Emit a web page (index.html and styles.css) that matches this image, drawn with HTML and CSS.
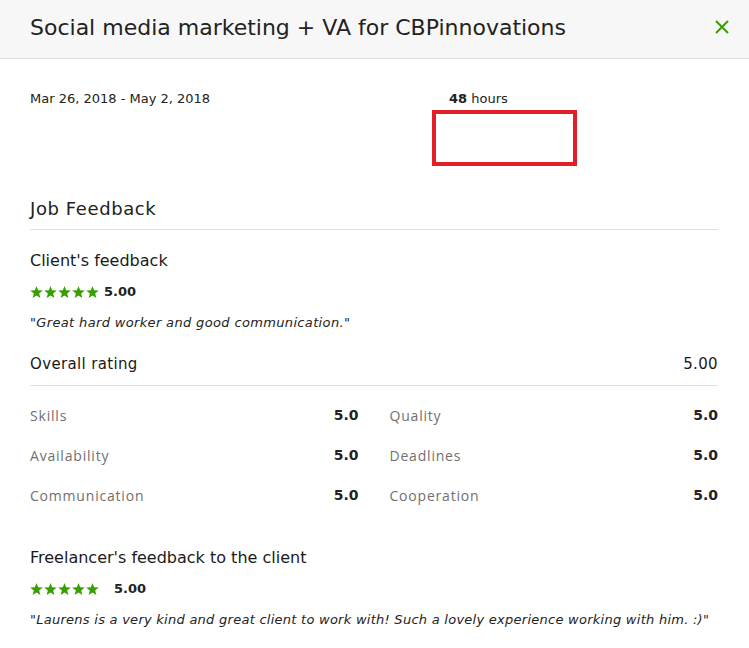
FILE: index.html
```html
<!DOCTYPE html>
<html>
<head>
<meta charset="utf-8">
<link rel="stylesheet" href="styles.css">
</head>
<body>
<div class="modal">
  <header class="head">
    <h1 class="title">Social media marketing + VA for CBPinnovations</h1>
    <button class="close" aria-label="Close">
      <svg width="16" height="16" viewBox="0 0 16 16"><path d="M2 2 L14 14 M14 2 L2 14" stroke="#37a000" stroke-width="2" fill="none"/></svg>
    </button>
  </header>
  <div class="body">
    <div class="meta">
      <div class="dates">Mar 26, 2018 - May 2, 2018</div>
      <div class="hours-col">
        <div class="hours"><b>48</b> hours</div>
        <div class="redbox"></div>
      </div>
    </div>

    <h2 class="section">Job Feedback</h2>

    <h3 class="sub">Client's feedback</h3>
    <div class="rating">
      <span class="stars">
        <svg viewBox="0 0 69 12" width="69" height="12">
          <g fill="#37a000">
            <path id="s" d="M6.5 0 L8.15 4.33 L12.78 4.56 L9.16 7.47 L10.38 11.94 L6.5 9.4 L2.62 11.94 L3.84 7.47 L0.22 4.56 L4.85 4.33Z"/>
            <use href="#s" x="14"/><use href="#s" x="28"/><use href="#s" x="42"/><use href="#s" x="56"/>
          </g>
        </svg>
      </span>
      <b class="score">5.00</b>
    </div>
    <p class="quote">"Great hard worker and good communication."</p>

    <div class="overall">
      <span>Overall rating</span>
      <span>5.00</span>
    </div>

    <div class="grid">
      <div class="row"><span class="lbl">Skills</span><b>5.0</b></div>
      <div class="row"><span class="lbl">Quality</span><b>5.0</b></div>
      <div class="row"><span class="lbl">Availability</span><b>5.0</b></div>
      <div class="row"><span class="lbl">Deadlines</span><b>5.0</b></div>
      <div class="row"><span class="lbl">Communication</span><b>5.0</b></div>
      <div class="row"><span class="lbl">Cooperation</span><b>5.0</b></div>
    </div>

    <h3 class="sub sub2">Freelancer's feedback to the client</h3>
    <div class="rating rating2">
      <span class="stars">
        <svg viewBox="0 0 69 12" width="69" height="12">
          <g fill="#37a000">
            <use href="#s" x="0"/><use href="#s" x="14"/><use href="#s" x="28"/><use href="#s" x="42"/><use href="#s" x="56"/>
          </g>
        </svg>
      </span>
      <b class="score">5.00</b>
    </div>
    <p class="quote quote2">"Laurens is a very kind and great client to work with! Such a lovely experience working with him. :)"</p>
  </div>
</div>
</body>
</html>
```
FILE: styles.css
```css
* { box-sizing: border-box; }
html, body { margin: 0; padding: 0; background: #fff; }
body { font-family: "DejaVu Sans", "Open Sans", sans-serif; color: #222; }
.modal { width: 749px; height: 648px; overflow: hidden; }
.head {
  height: 59px;
  background: #f7f7f7;
  border-bottom: 1px solid #e0e0e0;
  display: flex;
  align-items: center;
  justify-content: space-between;
  padding: 0 19px 4px 30px;
}
.title { margin: 0; font-size: 22px; line-height: 29px; font-weight: 400; color: #222; }
.close { background: none; border: 0; padding: 0; width: 16px; height: 16px; display: flex; margin-top: 0; }
.body { padding: 0 31px 0 30px; }
.meta { display: flex; padding-top: 31px; height: 136px; }
.dates { width: 419px; font-size: 13px; line-height: 18px; color: #222; }
.hours { font-size: 13px; line-height: 18px; color: #222; }
.hours b { font-weight: 700; }
.redbox {
  width: 145px; height: 56px;
  border: 4px solid #e31e26;
  margin: 2px 0 0 -17px;
}
.section { margin: 2px 0 0; font-size: 18px; line-height: 23px; letter-spacing: 0.6px; font-weight: 400; color: #222; padding-bottom: 9px; border-bottom: 1px solid #e0e0e0; }
.sub { margin: 0; font-size: 16px; line-height: 20px; font-weight: 400; color: #1a1a1a; padding-top: 21px; }
.rating { display: flex; align-items: center; gap: 5px; margin-top: 12px; }
.stars { display: flex; }
.score { font-size: 13px; line-height: 18px; font-weight: 700; }
.rating2 .score { margin-left: 10px; }
.quote { margin: 13px 0 0; font-size: 13px; line-height: 18px; font-style: italic; color: #222; letter-spacing: 0.35px; }
.quote2 { letter-spacing: 0.26px; }
.overall { display: flex; justify-content: space-between; margin-top: 22px; font-size: 15px; line-height: 20px; letter-spacing: 0.35px; padding-bottom: 11px; border-bottom: 1px solid #e0e0e0; color: #1a1a1a; }
.grid { display: grid; grid-template-columns: 1fr 1fr; column-gap: 31px; row-gap: 21px; padding-top: 20px; }
.row { display: flex; justify-content: space-between; font-size: 14px; line-height: 19px; }
.lbl { color: #707070; font-family: "Open Sans", sans-serif; letter-spacing: 0.8px; }
.row b { font-weight: 700; color: #222; }
.sub2 { padding-top: 43px; }
```
